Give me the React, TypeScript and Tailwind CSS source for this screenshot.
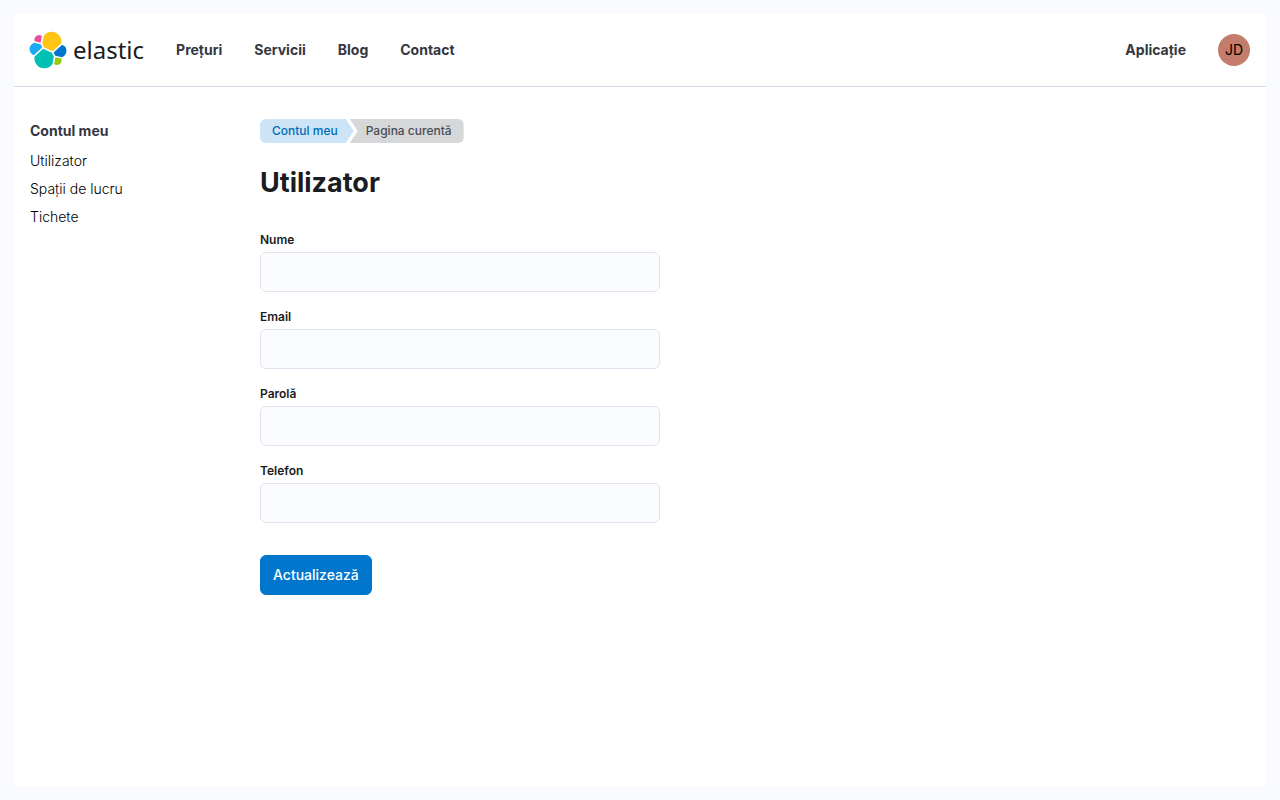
const navLinks = ["Prețuri", "Servicii", "Blog", "Contact"];
const accountLinks = ["Utilizator", "Spații de lucru", "Tichete"];
const fields = [
  { id: "name", label: "Nume", type: "text" },
  { id: "email", label: "Email", type: "email" },
  { id: "password", label: "Parolă", type: "password" },
  { id: "phone", label: "Telefon", type: "tel" },
];

function Logo() {
  return (
    <a href="#" aria-label="elastic" className="-ml-0.5 flex items-center gap-[5px] text-[#1a1c21]">
      <svg viewBox="0 0 32 32" className="size-10" aria-hidden="true">
        <path fill="#FEC514" d="M12.58 13.787l7.002 3.211 7.066-6.213a7.849 7.849 0 0 0 .152-1.557c0-4.311-3.502-7.818-7.807-7.818a7.78 7.78 0 0 0-6.438 3.408l-1.178 6.12z" />
        <path fill="#00BFB3" d="M5.333 21.228A7.964 7.964 0 0 0 5.186 22.8c0 4.33 3.521 7.845 7.844 7.845a7.8 7.8 0 0 0 6.482-3.438l1.164-6.105-1.556-2.985-7.03-3.211-6.756 6.323z" />
        <path fill="#F04E98" d="M5.288 9.067l4.8 1.137L11.14 4.72a3.785 3.785 0 0 0-6.065 3.025c0 .448.073.896.213 1.322" />
        <path fill="#1BA9F5" d="M4.872 10.214c-2.129.708-3.617 2.76-3.617 5.013 0 2.194 1.354 4.153 3.386 4.93l6.735-6.103-1.236-2.65-5.268-1.19z" />
        <path fill="#93C90E" d="M20.873 27.206a3.738 3.738 0 0 0 2.285.785 3.783 3.783 0 0 0 3.569-5.098l-4.8-1.124-1.054 5.437z" />
        <path fill="#0077CC" d="M21.848 20.563l5.28 1.238c2.13-.707 3.617-2.76 3.617-5.013a5.274 5.274 0 0 0-3.386-4.921l-6.908 6.066 1.397 2.63z" />
      </svg>
      <span className="font-['Noto_Sans',sans-serif] text-2xl leading-8 font-normal">elastic</span>
    </a>
  );
}

function Header() {
  return (
    <header className="flex items-center justify-between border-b border-[#d3dae6] px-4 py-4 text-sm font-bold text-[#343741]">
      <div className="flex items-center gap-8">
        <Logo />
        <nav className="flex gap-8">
          {navLinks.map((link) => (
            <a key={link} href="#">{link}</a>
          ))}
        </nav>
      </div>
      <div className="flex items-center gap-8">
        <a href="#">Aplicație</a>
        <button type="button" aria-label="JD" className="size-8 rounded-full bg-[#c47c6c] font-normal text-black">
          JD
        </button>
      </div>
    </header>
  );
}

function Breadcrumbs() {
  return (
    <nav aria-label="Breadcrumb">
      <ol className="flex text-xs leading-4 font-medium">
        <li className="rounded-l-md bg-[#cce4f5] py-1 pr-4 pl-3 text-[#006bb8] [clip-path:polygon(0_0,calc(100%-8px)_0,100%_50%,calc(100%-8px)_100%,0_100%)]">
          <a href="#">Contul meu</a>
        </li>
        <li aria-current="page" className="-ml-1 rounded-r-md bg-[#d6d7d9] py-1 pr-3 pl-4 text-[#4a4d56] [clip-path:polygon(0_0,100%_0,100%_100%,0_100%,8px_50%)]">
          Pagina curentă
        </li>
      </ol>
    </nav>
  );
}

export default function App() {
  return (
    <div className="flex min-h-screen bg-[#f8faff] p-3.5 font-['Inter',sans-serif]">
      <div className="flex flex-1 flex-col bg-white">
        <Header />
        <div className="flex px-4 pt-8">
          <aside className="w-[230px] shrink-0 text-sm text-[#1a1c21]">
            <h2 className="pt-0.5 pb-1.5 font-bold text-[#343741]">Contul meu</h2>
            <ul className="font-light text-black">
              {accountLinks.map((link) => (
                <li key={link} className="py-1">
                  <a href="#">{link}</a>
                </li>
              ))}
            </ul>
          </aside>
          <main className="flex-1">
            <Breadcrumbs />
            <h1 className="mt-6 text-[27px] leading-8 font-bold text-[#1a1c21]">Utilizator</h1>
            <form className="mt-8 flex max-w-[400px] flex-col gap-4" onSubmit={(e) => e.preventDefault()}>
              {fields.map((field) => (
                <div key={field.id} className="flex flex-col gap-1">
                  <label htmlFor={field.id} className="self-start pt-px text-xs leading-4 font-semibold text-[#1a1c21]">
                    {field.label}
                  </label>
                  <input
                    id={field.id}
                    type={field.type}
                    className="h-10 w-full rounded-md border border-[#e1e4f0] bg-[#fbfcfd] px-3 text-sm outline-none focus:border-[#0077cc]"
                  />
                </div>
              ))}
              <button type="submit" className="mt-4 h-10 self-start rounded-md border border-[#0077cc] bg-[#0077cc] px-3 text-sm font-medium text-white">
                Actualizează
              </button>
            </form>
          </main>
        </div>
      </div>
    </div>
  );
}
